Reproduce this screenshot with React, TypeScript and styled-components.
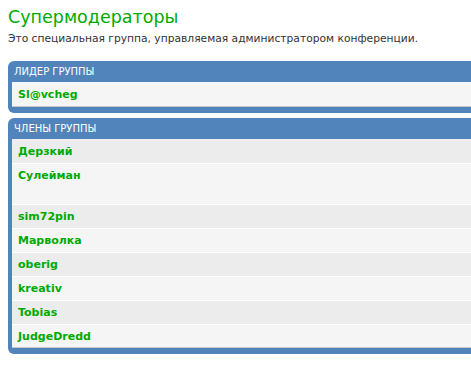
import React from "react";
import styled, { createGlobalStyle } from "styled-components";

const Global = createGlobalStyle`
  html, body { margin: 0; padding: 0; background: #ffffff; overflow: hidden; }
  body { font-family: "DejaVu Sans", Verdana, sans-serif; }
`;

const Page = styled.div`
  padding: 5px 0 0 8px;
  width: 480px;
`;

const Title = styled.h2`
  margin: 0;
  font-family: "DejaVu Sans", Verdana, sans-serif;
  font-weight: normal;
  font-size: 17.5px;
  line-height: 24px;
  color: #00aa00;
`;

const Desc = styled.p`
  margin: 3px 0 0 0;
  font-size: 10.7px;
  line-height: 14px;
  color: #333333;
`;

const Panel = styled.div<{ $top: number }>`
  margin-top: ${(p) => p.$top}px;
  background: #5084bb;
  border-radius: 6px;
  padding: 0 0 6px 4px;
`;

const Header = styled.div`
  height: 21px;
  display: flex;
  align-items: center;
  padding-left: 2px;
  color: #ffffff;
  font-size: 10px;
  text-transform: uppercase;
`;

const List = styled.div`
  display: flex;
  flex-direction: column;
`;

const Row = styled.div<{ $alt: boolean; $tall?: boolean }>`
  height: ${(p) => (p.$tall ? 41 : 24)}px;
  background: ${(p) => (p.$alt ? "#ececec" : "#f5f5f5")};
  border-top: 1px solid #ffffff;
  padding-left: 6px;
  display: flex;
  align-items: ${(p) => (p.$tall ? "flex-start" : "center")};
  padding-top: ${(p) => (p.$tall ? 5 : 0)}px;
  box-sizing: border-box;
  &:first-child { border-top: none; }
  &:last-child { border-bottom: 1px solid #c8c8c8; }
`;

const Name = styled.a`
  color: #00aa00;
  font-weight: bold;
  font-size: 11px;
  text-decoration: none;
`;

const members: { name: string; tall?: boolean }[] = [
  { name: "Дерзкий" },
  { name: "Сулейман", tall: true },
  { name: "sim72pin" },
  { name: "Марволка" },
  { name: "oberig" },
  { name: "kreativ" },
  { name: "Tobias" },
  { name: "JudgeDredd" },
];

export default function App() {
  return (
    <Page>
      <Global />
      <Title>Супермодераторы</Title>
      <Desc>Это специальная группа, управляемая администратором конференции.</Desc>
      <Panel $top={15}>
        <Header>Лидер группы</Header>
        <List>
          <Row $alt={false} style={{ height: 25 }}>
            <Name href="#">Sl@vcheg</Name>
          </Row>
        </List>
      </Panel>
      <Panel $top={5}>
        <Header>Члены группы</Header>
        <List>
          {members.map((m, i) => (
            <Row key={m.name} $alt={i % 2 === 0} $tall={m.tall}>
              <Name href="#">{m.name}</Name>
            </Row>
          ))}
        </List>
      </Panel>
    </Page>
  );
}
